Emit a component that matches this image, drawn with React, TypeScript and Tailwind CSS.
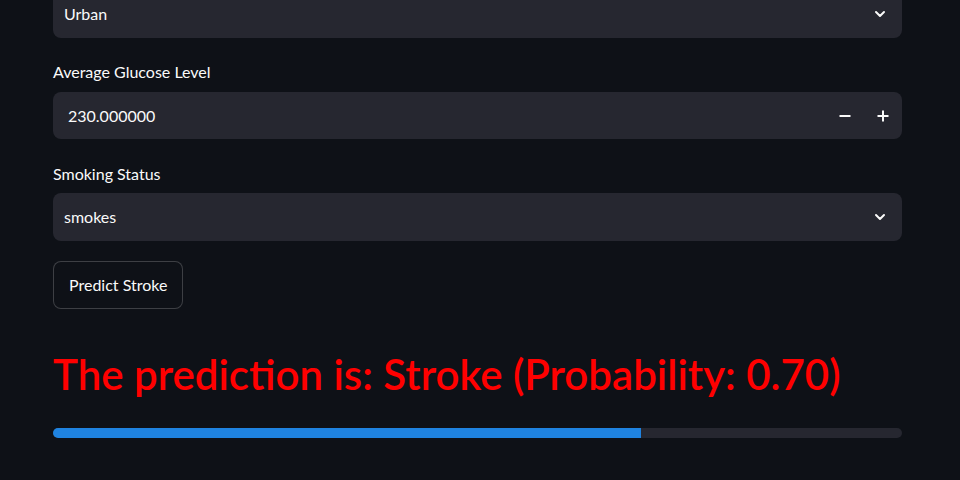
import React from "react";

const Chevron = () => (
  <svg width="16" height="16" viewBox="0 0 24 24" fill="none" stroke="#fafafa" strokeWidth="3" strokeLinecap="round" strokeLinejoin="round">
    <polyline points="6 9 12 15 18 9" />
  </svg>
);

function SelectBox({ value }: { value: string }) {
  return (
    <div className="h-[48px] rounded-lg bg-[#262730] flex items-center justify-between pl-[11px] pr-[14px]">
      <span className="text-[16px] text-[#fafafa]">{value}</span>
      <Chevron />
    </div>
  );
}

export default function App() {
  return (
    <main
      className="min-h-screen w-full bg-[#0e1117] text-[#fafafa] overflow-hidden"
      style={{ fontFamily: '"Source Sans Pro", Lato, "Liberation Sans", sans-serif' }}
    >
      <div className="w-[849px] ml-[53px] -mt-[10px] flex flex-col">
        <SelectBox value="Urban" />

        <label className="mt-[24px] text-[16px] leading-[20px] text-[#fafafa]">Average Glucose Level</label>
        <div className="mt-[10px] h-[47px] rounded-lg bg-[#262730] flex items-center justify-between pl-[15px]">
          <span className="text-[16px]">230.000000</span>
          <div className="flex items-center h-full">
            <button className="w-[38px] h-full flex items-center justify-center">
              <svg width="12" height="12" viewBox="0 0 12 12">
                <rect x="0.5" y="5" width="11" height="2" fill="#fafafa" />
              </svg>
            </button>
            <button className="w-[38px] h-full flex items-center justify-center">
              <svg width="12" height="12" viewBox="0 0 12 12">
                <rect x="0.5" y="5" width="11" height="2" fill="#fafafa" />
                <rect x="5" y="0.5" width="2" height="11" fill="#fafafa" />
              </svg>
            </button>
          </div>
        </div>

        <label className="mt-[25px] text-[16px] leading-[20px]">Smoking Status</label>
        <div className="mt-[9px]">
          <SelectBox value="smokes" />
        </div>

        <div className="mt-[20px]">
          <button className="h-[48px] px-[15px] rounded-lg border border-[#fafafa33] bg-[#0e1117] text-[16px] text-[#fafafa]">
            Predict Stroke
          </button>
        </div>

        <h2 className="mt-[39px] text-[42px] leading-[52px] font-semibold text-[#ff0000]">
          The prediction is: Stroke (Probability: 0.70)
        </h2>

        <div className="mt-[28px] h-[10px] rounded-full bg-[#262730] overflow-hidden">
          <div className="h-full w-[69.2%] bg-[#1f83e0]" />
        </div>
      </div>
    </main>
  );
}
